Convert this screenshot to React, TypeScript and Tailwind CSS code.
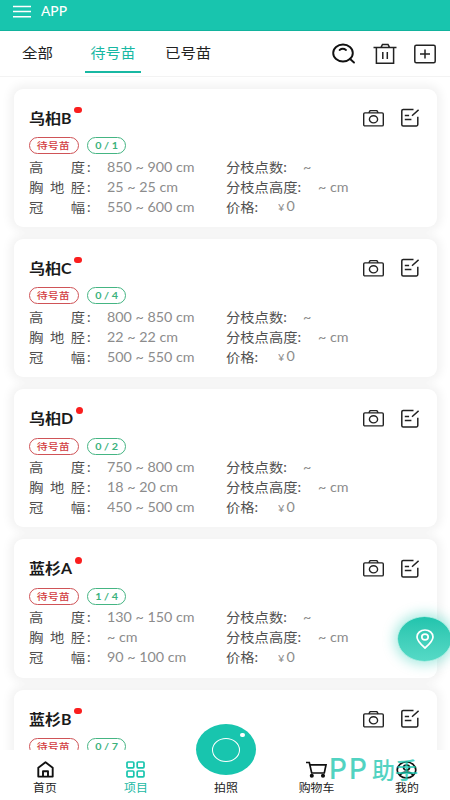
import React from "react"
import clsx from "clsx"

interface Seedling {
  id: number
  name: string
  count: string
  height: string
  diameter: string
  crown: string
}

const seedlings: Seedling[] = [
  { id: 1, name: "乌桕B", count: "0 / 1", height: "850 ~ 900 cm", diameter: "25 ~ 25 cm", crown: "550 ~ 600 cm" },
  { id: 2, name: "乌桕C", count: "0 / 4", height: "800 ~ 850 cm", diameter: "22 ~ 22 cm", crown: "500 ~ 550 cm" },
  { id: 3, name: "乌桕D", count: "0 / 2", height: "750 ~ 800 cm", diameter: "18 ~ 20 cm", crown: "450 ~ 500 cm" },
  { id: 4, name: "蓝杉A", count: "1 / 4", height: "130 ~ 150 cm", diameter: "~ cm", crown: "90 ~ 100 cm" },
]

// last one is only partly visible above the tab bar
const lastSeedling = { name: "蓝杉B", count: "0 / 7" }

// slightly widened text, used everywhere in the app
const Wide = ({ className, children }: { className?: string; children: React.ReactNode }) => (
  <span className={clsx("inline-block origin-left scale-x-110 whitespace-nowrap", className)}>{children}</span>
)

const MenuIcon = () => (
  <svg width="18" height="14" viewBox="0 0 18 14" stroke="#fff" strokeWidth="1.4">
    <path d="M0 2.500h18M0 7.500h18M0 12.800h18" />
  </svg>
)

const SearchIcon = () => (
  <svg width="24" height="22" viewBox="0 0 24 22" fill="none" stroke="#111" strokeWidth="1.9" strokeLinecap="round">
    <ellipse cx="11" cy="10" rx="9.800" ry="8.500" />
    <path d="M7.600 7c1.900-1.500 4.500-1.500 6.400 0M17.800 15.800l4.200 3.700" />
  </svg>
)

const TrashIcon = () => (
  <svg width="24" height="22" viewBox="0 0 24 22" fill="none" stroke="#222" strokeWidth="1.500">
    <path d="M.5 4.600h23M3.400 4.600v15.700h17.200V4.600M8 4.400l1.500-3h5.500l1.500 3M9.800 9v7M14.300 9v7" />
  </svg>
)

const AddIcon = () => (
  <svg width="22" height="20" viewBox="0 0 22 20" fill="none" stroke="#222" strokeWidth="1.500">
    <rect x=".8" y="1.200" width="20.400" height="17.600" rx="1.500" />
    <path d="M6 10h10M11 5.600v8.800" />
  </svg>
)

const CameraIcon = () => (
  <svg width="21" height="18" viewBox="0 0 21 18" fill="none" stroke="#222" strokeWidth="1.400">
    <rect x=".7" y="3.900" width="19.600" height="13" rx="1.200" />
    <path d="M5.800 3.900l1.300-2.300h6.800l1.300 2.300" />
    <ellipse cx="10.500" cy="10.300" rx="4.100" ry="3.600" />
  </svg>
)

const EditIcon = () => (
  <svg width="18" height="19" viewBox="0 0 18 19" fill="none" stroke="#222" strokeWidth="1.500">
    <path d="M12.500 1.500H2.200Q.8 1.500.8 2.700v14Q.8 17.900 2.200 17.900h13.300q1.300 0 1.300-1.300V8.700M3.800 7.500h4.300M3.800 11.500h6.600M11 7.800l6.600-5.900" />
  </svg>
)

const Row = ({ label, value, label2, value2 }: { label: string; value: string; label2: string; value2: string }) => (
  <div className="flex h-5 items-center text-[13px] leading-5 text-[#505050]">
    <div className="flex w-[51px] shrink-0 origin-left scale-x-110 justify-between">
      {label.split("").map((c) => (
        <span key={c} className="w-[13px] text-center">{c}</span>
      ))}
    </div>
    <Wide className="ml-[7px] w-[19.500px]">:</Wide>
    <Wide className="w-[119.500px] text-[#8c8c8c]">{value}</Wide>
    <Wide>{label2}:</Wide>
    <Wide className={clsx("text-[#8c8c8c]", label2.length === 2 ? "ml-[23px]" : label2.length === 4 ? "ml-[22px]" : "ml-[24px]")}>
      {value2 === "0" ? (
        <>
          <span className="mr-[2px] text-[10px]">¥</span>0
        </>
      ) : (
        value2
      )}
    </Wide>
  </div>
)

const CardHead = ({ name, count }: { name: string; count: string }) => (
  <>
    <div className="flex h-[22px] items-center">
      <div className="relative">
        <Wide className="text-[14.500px] font-bold leading-[22px] text-[#1a1a1a]">{name}</Wide>
        <span className="absolute -right-[14px] top-[1px] h-[6.500px] w-[7.500px] rounded-full bg-[#fa1e1e]" />
      </div>
      <div className="ml-auto flex items-center gap-[17px]">
        <CameraIcon />
        <EditIcon />
      </div>
    </div>
    <div className="mb-[2.500px] mt-[8.500px] flex gap-[9px]">
      <span className="-ml-[.5px] flex h-[17px] w-[50px] items-center justify-center rounded-full border border-[#cf5357] text-[9.500px] font-medium leading-[15px] text-[#d23c41]">
        <span className="scale-x-[1.150]">待号苗</span>
      </span>
      <span className="-ml-[.5px] flex h-[17px] w-[39px] items-center justify-center rounded-full border border-[#45b583] text-[10px] font-bold leading-[15px] text-[#3cb27d]">
        <span className="scale-x-[1.080]">{count}</span>
      </span>
    </div>
  </>
)

const cardClass =
  "shrink-0 bg-white pl-[15px] pr-[18px] pt-[18px] shadow-[0_0_10px_4px_rgba(0,0,0,0.055)]"

const Card = ({ item }: { item: Seedling }) => (
  <div className={clsx(cardClass, "h-[138.250px] rounded-[9px]")}>
    <CardHead name={item.name} count={item.count} />
    <Row label="高度" value={item.height} label2="分枝点数" value2="~" />
    <Row label="胸地胫" value={item.diameter} label2="分枝点高度" value2="~ cm" />
    <Row label="冠幅" value={item.crown} label2="价格" value2="0" />
  </div>
)

const HomeIcon = () => (
  <svg width="17" height="17" viewBox="0 0 17 17" fill="none" stroke="#111" strokeWidth="1.900" strokeLinejoin="round">
    <path d="M1.300 6.700L8.500 1.300l7.200 5.400V15.600H1.300zM6 15.600V10.200h5v5.400" />
  </svg>
)

const GridIcon = () => (
  <svg width="19" height="17" viewBox="0 0 19 17" fill="none" stroke="#18c5ae" strokeWidth="1.700">
    <rect x="1" y="1" width="6.800" height="5.800" rx="1" />
    <rect x="11.200" y="1" width="6.800" height="5.800" rx="1" />
    <rect x="1" y="10" width="6.800" height="5.800" rx="1" />
    <rect x="11.200" y="10" width="6.800" height="5.800" rx="1" />
  </svg>
)

const CartIcon = () => (
  <svg width="21" height="17" viewBox="0 0 21 17" fill="none" stroke="#111" strokeWidth="1.700">
    <path d="M0 1.500h3.300L5.700 12h12.600L20 3.800H4" />
    <circle cx="5.800" cy="14.700" r="1.200" fill="#111" />
    <circle cx="17" cy="14.700" r="1.200" fill="#111" />
  </svg>
)

const UserIcon = () => (
  <svg width="21" height="18" viewBox="0 0 21 18" fill="none" stroke="#111" strokeWidth="1.700">
    <ellipse cx="10.500" cy="9" rx="9.300" ry="8" />
    <ellipse cx="10.500" cy="6.600" rx="3" ry="2.600" />
    <path d="M4 14.200c2.500-4 10.500-4 13 0" />
  </svg>
)

const navItems = [
  { label: "首页", icon: <HomeIcon /> },
  { label: "项目", icon: <GridIcon />, active: true },
  { label: "拍照", icon: null },
  { label: "购物车", icon: <CartIcon /> },
  { label: "我的", icon: <UserIcon /> },
]

const App = () => {
  return (
    <div className="relative flex h-[800px] w-[450px] flex-col overflow-hidden bg-white font-['Lato','Noto_Sans_CJK_SC',sans-serif]">
      <header className="flex h-[31px] shrink-0 items-start border-b border-[#12b39d] bg-[#18c5ae] pl-[13px] pt-[4px] text-white">
        <MenuIcon />
        <Wide className="ml-[9.500px] text-[12.500px] font-medium leading-[15px]">APP</Wide>
      </header>

      <div className="flex h-[46px] shrink-0 items-start border-b border-[#f3f3f3] pl-[22px] pr-[14px] text-[14px] leading-[22px] text-[#222]">
        <Wide className="mt-[11px] w-[63px]">全部</Wide>
        <div className="flex h-[41.500px] w-[56px] justify-center border-b-2 border-[#18b8a3] pt-[11px] text-[#18b8a3]">
          <span className="scale-x-[1.070] whitespace-nowrap">待号苗</span>
        </div>
        <Wide className="ml-[24px] mt-[11px]">已号苗</Wide>
        <div className="ml-auto mt-[12px] flex items-center gap-[17px]">
          <SearchIcon />
          <TrashIcon />
          <AddIcon />
        </div>
      </div>

      <main className="flex min-h-0 flex-1 flex-col gap-3 overflow-hidden pl-[14px] pr-[13px] pt-[11.500px]">
        {seedlings.map((item) => (
          <Card key={item.id} item={item} />
        ))}
        <div className={clsx(cardClass, "h-[70px] rounded-t-[9px]")}>
          <CardHead name={lastSeedling.name} count={lastSeedling.count} />
        </div>
      </main>

      <nav className="relative grid h-[50px] w-[452px] shrink-0 grid-cols-5 bg-white">
        {navItems.map((item) => (
          <div
            key={item.label}
            className={clsx("flex flex-col items-center pt-[10px] text-[11px]", item.active ? "text-[#18b8a3]" : "text-[#222]")}
          >
            <div className="flex h-[19px] items-center">{item.icon}</div>
            <span className="scale-x-[1.080] leading-[18px]">{item.label}</span>
          </div>
        ))}
        <div className="absolute -top-[26px] left-[196px] h-[51px] w-[60px] rounded-[50%] bg-[#18c5ae]">
          <span className="absolute left-[16px] top-[14px] h-[24px] w-[28px] rounded-[50%] border-[1.500px] border-white" />
          <span className="absolute left-[44px] top-[9px] h-1 w-[5px] rounded-full bg-white" />
        </div>
        <div className="absolute left-[329px] top-[3px] flex items-baseline whitespace-nowrap font-['Inter','Noto_Sans_CJK_SC',sans-serif] text-[23px] font-medium leading-[32px] text-[#18c5ae] opacity-75">
          <span className="w-[43px] text-[28px] tracking-[2px]">PP</span>
          <span>助手</span>
        </div>
      </nav>

      <div className="absolute left-[397px] top-[616px] flex h-[46px] w-[55px] items-center justify-center rounded-[50%] border border-[#a9ece1] bg-gradient-to-b from-[#20c4ad] to-[#55dac6] shadow-[0_0_12px_3px_rgba(24,197,174,0.35)]">
        <svg width="18" height="20" viewBox="0 0 18 20" fill="none" stroke="#fff" strokeWidth="1.700">
          <path d="M9 19C5 15.600 1 12 1 8c0-4 3.600-7 8-7s8 3 8 7c0 4-4 7.600-8 11z" strokeLinejoin="round" />
          <ellipse cx="9" cy="8" rx="3.200" ry="2.800" />
        </svg>
      </div>
    </div>
  )
}

export default App
